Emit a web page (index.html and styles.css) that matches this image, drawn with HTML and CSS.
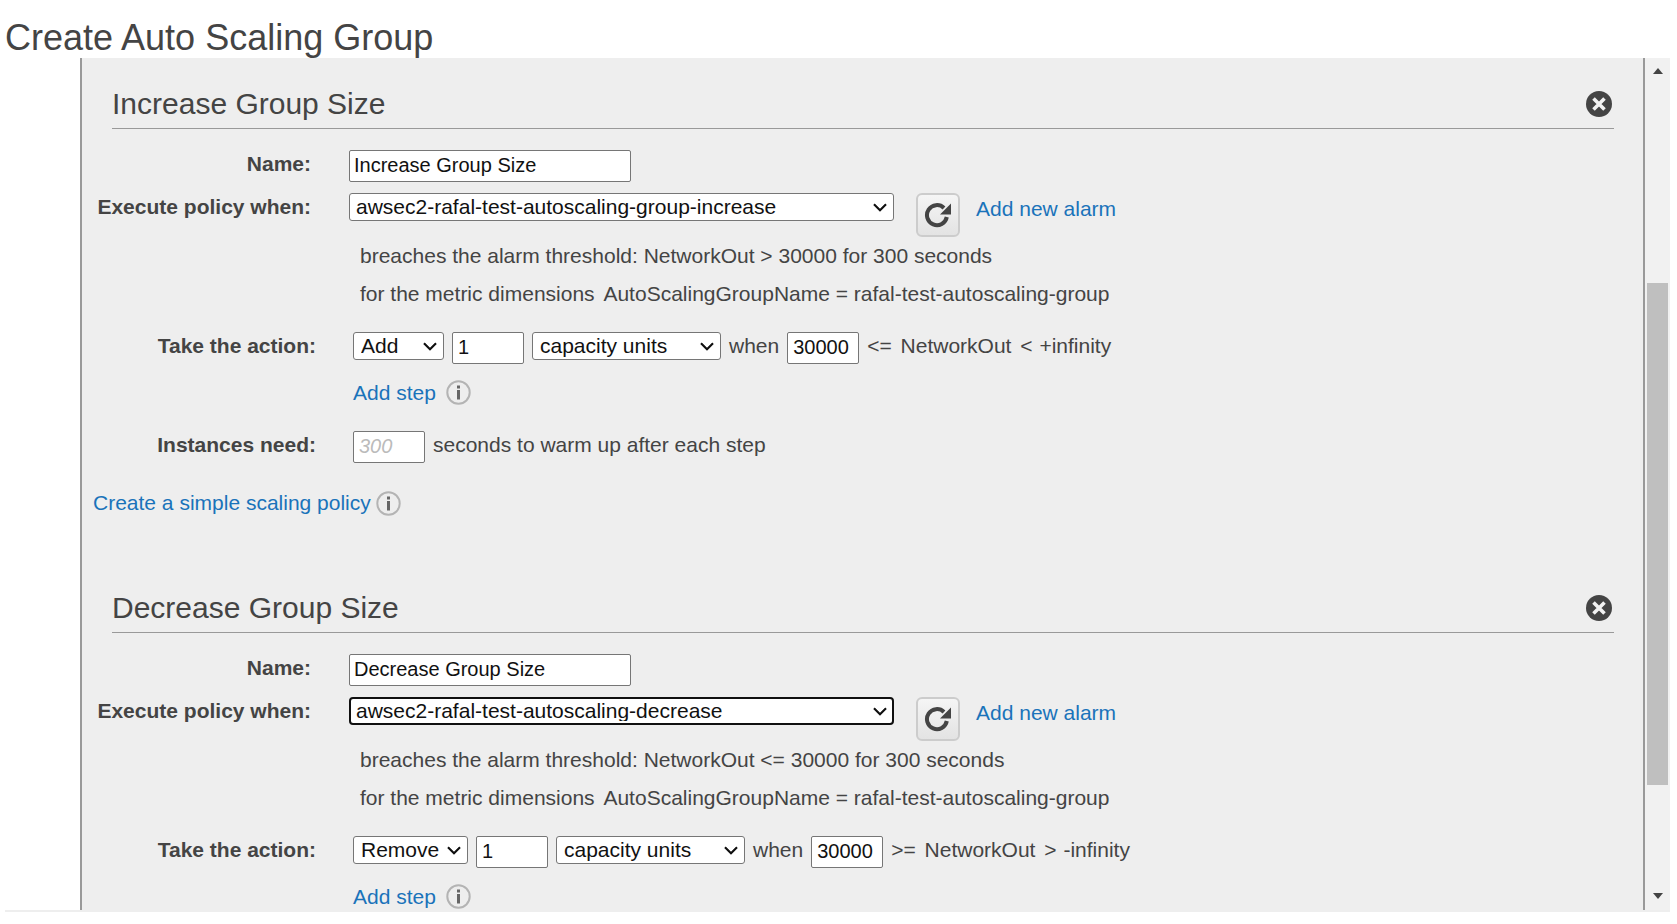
FILE: index.html
```html
<!DOCTYPE html>
<html lang="en">
<head>
<meta charset="utf-8">
<title>Create Auto Scaling Group</title>
<link rel="stylesheet" href="styles.css">
</head>
<body>
<h1 class="title">Create Auto Scaling Group</h1>
<div class="frame">
  <main class="panel">
    <section class="policy">
      <header class="policy-head">
        <h2 class="policy-title">Increase Group Size</h2>
        <svg class="close" viewBox="0 0 26 26" width="26" height="26"><circle cx="13" cy="13" r="13" fill="#444"/><path d="M7.5 7.5l11 11M18.5 7.5l-11 11" stroke="#f2f2f2" stroke-width="3.6" fill="none"/></svg>
      </header>
      <div class="row row-name">
        <label class="label">Name:</label>
        <input class="text-input name-input" type="text" value="Increase Group Size">
      </div>
      <div class="row row-exec">
        <label class="label label-exec">Execute policy when:</label>
        <select class="select alarm-select"><option>awsec2-rafal-test-autoscaling-group-increase</option></select>
        <button class="refresh" type="button" aria-label="Refresh">
          <svg viewBox="0 0 28 28" width="28" height="28"><path d="M20 7A10 10 0 1 0 22.8 16" stroke="#444" stroke-width="4" fill="none"/><path d="M16 13.5H27V2.5Z" fill="#444"/></svg>
        </button>
        <a class="link alarm-link" href="#">Add new alarm</a>
      </div>
      <p class="note note-first">breaches the alarm threshold: NetworkOut &gt; 30000 for 300 seconds</p>
      <p class="note note-second">for the metric dimensions <span class="dim">AutoScalingGroupName = rafal-test-autoscaling-group</span></p>
      <div class="row row-action">
        <label class="label label-wide">Take the action:</label>
        <select class="select compact op-add"><option>Add</option></select>
        <input class="text-input num" type="text" value="1">
        <select class="select compact unit"><option>capacity units</option></select>
        <span class="plain">when</span>
        <input class="text-input num" type="text" value="30000">
        <span class="plain">&lt;= <span class="metric">NetworkOut</span> <span class="metric">&lt;</span> <span class="metric-end">+infinity</span></span>
      </div>
      <div class="row row-step">
        <a class="link step-link" href="#">Add step</a>
        <svg class="info" viewBox="0 0 25 25" width="25" height="25"><circle cx="12.5" cy="12.5" r="11.2" fill="none" stroke="#b4b4b4" stroke-width="2"/><rect x="11" y="10" width="3" height="9.5" fill="#666"/><rect x="11" y="5.5" width="3" height="3" fill="#666"/></svg>
      </div>
      <div class="row row-warm">
        <label class="label label-wide">Instances need:</label>
        <input class="text-input num" type="text" placeholder="300">
        <span class="plain">seconds to warm up after each step</span>
      </div>
      <div class="row row-simple">
        <a class="link" href="#">Create a simple scaling policy</a>
        <svg class="info info-simple" viewBox="0 0 25 25" width="25" height="25"><circle cx="12.5" cy="12.5" r="11.2" fill="none" stroke="#b4b4b4" stroke-width="2"/><rect x="11" y="10" width="3" height="9.5" fill="#666"/><rect x="11" y="5.5" width="3" height="3" fill="#666"/></svg>
      </div>
    </section>
    <section class="policy">
      <header class="policy-head">
        <h2 class="policy-title">Decrease Group Size</h2>
        <svg class="close" viewBox="0 0 26 26" width="26" height="26"><circle cx="13" cy="13" r="13" fill="#444"/><path d="M7.5 7.5l11 11M18.5 7.5l-11 11" stroke="#f2f2f2" stroke-width="3.6" fill="none"/></svg>
      </header>
      <div class="row row-name">
        <label class="label">Name:</label>
        <input class="text-input name-input" type="text" value="Decrease Group Size">
      </div>
      <div class="row row-exec">
        <label class="label label-exec">Execute policy when:</label>
        <select class="select alarm-select is-focused"><option>awsec2-rafal-test-autoscaling-decrease</option></select>
        <button class="refresh" type="button" aria-label="Refresh">
          <svg viewBox="0 0 28 28" width="28" height="28"><path d="M20 7A10 10 0 1 0 22.8 16" stroke="#444" stroke-width="4" fill="none"/><path d="M16 13.5H27V2.5Z" fill="#444"/></svg>
        </button>
        <a class="link alarm-link" href="#">Add new alarm</a>
      </div>
      <p class="note note-first">breaches the alarm threshold: NetworkOut &lt;= 30000 for 300 seconds</p>
      <p class="note note-second">for the metric dimensions <span class="dim">AutoScalingGroupName = rafal-test-autoscaling-group</span></p>
      <div class="row row-action">
        <label class="label label-wide">Take the action:</label>
        <select class="select compact op-remove"><option>Remove</option></select>
        <input class="text-input num" type="text" value="1">
        <select class="select compact unit"><option>capacity units</option></select>
        <span class="plain">when</span>
        <input class="text-input num" type="text" value="30000">
        <span class="plain">&gt;= <span class="metric">NetworkOut</span> <span class="metric">&gt;</span> <span class="metric-end">-infinity</span></span>
      </div>
      <div class="row row-step">
        <a class="link step-link" href="#">Add step</a>
        <svg class="info" viewBox="0 0 25 25" width="25" height="25"><circle cx="12.5" cy="12.5" r="11.2" fill="none" stroke="#b4b4b4" stroke-width="2"/><rect x="11" y="10" width="3" height="9.5" fill="#666"/><rect x="11" y="5.5" width="3" height="3" fill="#666"/></svg>
      </div>
    </section>
  </main>
  <aside class="scrollbar" aria-hidden="true">
    <span class="arrow arrow-up"></span>
    <span class="thumb"></span>
    <span class="arrow arrow-down"></span>
  </aside>
</div>
<div class="strip"></div>
</body>
</html>
```
FILE: styles.css
```css
* { box-sizing: border-box; }
html, body { margin: 0; height: 100%; overflow: hidden; background: #fff; }
body { font-family: "Liberation Sans", Arial, sans-serif; font-size: 21px; color: #444; }

.title {
  margin: 0;
  height: 58px;
  padding: 15px 0 0 5px;
  font-size: 36px;
  line-height: 46px;
  font-weight: 400;
  white-space: nowrap;
}

.frame {
  display: flex;
  height: 852px;
  width: 1590px;
  margin-left: 80px;
  border-left: 2px solid #999;
}
.panel {
  width: 1563px;
  height: 100%;
  padding-left: 1px;
  overflow: hidden;
  background: #eee;
  border-right: 2px solid #999;
}
.policy { height: 504px; }
.policy-head {
  display: flex;
  align-items: center;
  justify-content: space-between;
  width: 1502px;
  height: 71px;
  margin-left: 29px;
  padding: 29px 2px 8px 0;
  border-bottom: 1px solid #999;
}
.policy-title { margin: 0; font-size: 30px; line-height: 33px; font-weight: 400; white-space: nowrap; }
.close { flex: none; }

.row { display: flex; align-items: center; white-space: nowrap; }
.label { flex: none; width: 228px; margin-right: 38px; text-align: right; font-weight: 700; }
.label-wide { width: 233px; margin-right: 37px; }
.row-name { height: 32px; margin-top: 21px; }
.row-name .label { padding-bottom: 4px; }
.row-exec { align-items: flex-start; height: 44px; margin-top: 11px; }
.label-exec { line-height: 27px; }
.row-action { height: 32px; margin-top: 26px; align-items: flex-start; }
.row-action .label { line-height: 27px; }
.row-action .plain { line-height: 27px; }
.row-step { height: 25px; margin-top: 16px; margin-left: 270px; }
.row-warm { height: 32px; margin-top: 26px; }
.row-warm .label, .row-warm .plain { padding-bottom: 4px; }
.row-simple { height: 25px; margin-top: 27px; margin-left: 10px; }

.text-input {
  height: 32px;
  padding: 0 5px 2px;
  margin: 0;
  border: 1px solid #767676;
  border-radius: 2px;
  background: #fff;
  color: #111;
  font-family: inherit;
  font-size: 20px;
}
.text-input::placeholder { color: #bbb; font-style: italic; }
.name-input { width: 282px; padding-left: 4px; }
.num { width: 72px; margin-right: 8px; }
.select {
  -webkit-appearance: none;
  appearance: none;
  height: 28px;
  margin: 0 8px 0 0;
  padding: 0 24px 2px 6px;
  border: 1px solid #767676;
  border-radius: 3px;
  background: #fff url("data:image/svg+xml,%3Csvg xmlns='http://www.w3.org/2000/svg' width='14' height='9' viewBox='0 0 14 9'%3E%3Cpath d='M1 1.2l6 6 6-6' fill='none' stroke='%23111' stroke-width='2.2'/%3E%3C/svg%3E") no-repeat right 6px center;
  color: #111;
  font: inherit;
  flex: none;
}
.compact { padding-left: 7px; }
.alarm-select { width: 545px; margin-right: 0; }
.is-focused { border: 2px solid #101010; border-radius: 4px; padding-left: 5px; background-position: right 5px center; }
.op-add { width: 91px; }
.op-remove { width: 115px; }
.unit { width: 189px; }
.plain { margin-right: 8px; }
.metric { margin-left: 3px; }
.metric-end { margin-left: 1px; }

.refresh {
  flex: none;
  display: flex;
  align-items: center;
  justify-content: center;
  width: 44px;
  height: 44px;
  margin-left: 22px;
  padding: 0;
  border: 2px solid #ccc;
  border-radius: 6px;
  background: linear-gradient(#f5f5f5, #e3e3e3);
}
.link { color: #1a73ba; text-decoration: none; }
.alarm-link { margin-left: 16px; line-height: 32px; }
.step-link { margin-right: 10px; }
.info { flex: none; }
.info-simple { margin-left: 5px; margin-top: 2px; }

.note { margin: 0 0 0 277px; line-height: 24px; white-space: nowrap; }
.note-first { margin-top: 7px; }
.note-second { margin-top: 14px; }
.dim { margin-left: 3px; }

.scrollbar {
  flex: none;
  display: flex;
  flex-direction: column;
  align-items: center;
  width: 25px;
  height: 100%;
  background: #f1f1f1;
}
.arrow { flex: none; width: 0; height: 0; border-left: 5.5px solid transparent; border-right: 5.5px solid transparent; }
.arrow-up { margin-top: 10px; border-bottom: 6px solid #444; }
.thumb { flex: none; width: 21px; height: 502px; margin-top: 209px; background: #bfbfbf; }
.arrow-down { margin-top: 108px; border-top: 6px solid #444; }

.strip { height: 2px; margin-left: 5px; width: 1665px; background: #eee; }
```
